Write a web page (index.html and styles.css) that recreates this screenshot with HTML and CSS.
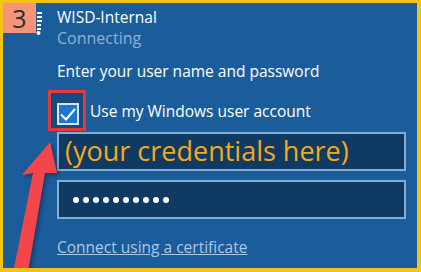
FILE: index.html
```html
<!DOCTYPE html>
<html lang="en">
<head>
    <meta charset="UTF-8">
    <meta name="viewport" content="width=device-width, initial-scale=1.0">
    <title>WISD-Internal</title>
    <link rel="stylesheet" href="styles.css">
</head>
<body>
    <div class="frame">
        <svg class="wifi" width="10" height="26" viewBox="0 0 10 26">
            <g fill="#fff">
                <rect x="1" y="0" width="5" height="2"/>
                <rect x="1" y="4" width="5" height="2"/>
                <rect x="1" y="8" width="5" height="2"/>
                <rect x="1" y="12" width="4" height="2"/>
                <rect x="1" y="16" width="4" height="2"/>
                <circle cx="2.5" cy="21" r="2"/>
            </g>
        </svg>
        <div class="badge">3</div>

        <div class="panel">
            <div class="network">WISD-Internal</div>
            <div class="status">Connecting</div>
            <p class="prompt">Enter your user name and password</p>
            <div class="check-row">
                <span class="highlight">
                    <span class="check-box">
                        <svg width="18" height="18" viewBox="0 0 18 18">
                            <path d="M2 9.5 L7 14.5 L16 4" fill="none" stroke="#fff" stroke-width="2"/>
                        </svg>
                    </span>
                </span>
                <span class="check-label">Use my Windows user account</span>
            </div>
            <div class="field field-user">(your credentials here)</div>
            <div class="field field-pass">
                <span class="dot"></span><span class="dot"></span><span class="dot"></span><span class="dot"></span><span class="dot"></span>
                <span class="dot"></span><span class="dot"></span><span class="dot"></span><span class="dot"></span><span class="dot"></span>
            </div>
            <a class="cert-link" href="#">Connect using a certificate</a>
        </div>

        <svg class="arrow" width="70" height="140" viewBox="0 0 70 140">
            <polygon points="12,140 33,35 22,37 50,4 57,35 45,35 27,140" fill="#f2464a"/>
        </svg>
    </div>
</body>
</html>
```

FILE: styles.css
```css
body {
    margin: 0;
    font-family: "Open Sans", "Noto Sans", sans-serif;
}
.frame {
    position: relative;
    width: 421px;
    height: 272px;
    box-sizing: border-box;
    border: 3px solid #f5c316;
    border-right-width: 4px;
    border-bottom-width: 4px;
    background: #1b5d9b;
    overflow: hidden;
}
.badge {
    position: absolute;
    left: 0;
    top: 0;
    width: 33px;
    height: 30px;
    background: #f4957a;
    color: #2c2c34;
    font-size: 25px;
    line-height: 30px;
    text-align: center;
}
.wifi {
    position: absolute;
    left: 33px;
    top: 9px;
}
.panel {
    padding: 4px 0 0 54px;
    width: 349px;
}
.network {
    color: #fff;
    font-size: 15.5px;
    line-height: 20px;
}
.status {
    color: #8fb1d3;
    font-size: 16px;
    line-height: 22px;
}
.prompt {
    color: #fff;
    font-size: 15.5px;
    line-height: 20px;
    margin: 12px 0 0;
}
.check-row {
    display: flex;
    align-items: center;
    margin-top: 9px;
}
.highlight {
    display: flex;
    margin-left: -9px;
    padding: 10px 4px 3px 6px;
    border: 3px solid #e8373c;
    background: #154c80;
}
.check-box {
    display: flex;
    align-items: center;
    justify-content: center;
    width: 18px;
    height: 18px;
    border: 2px solid #d8e6f4;
    background: #1e77cf;
}
.check-label {
    color: #fff;
    font-size: 15.5px;
    margin-left: 4px;
}
.field {
    height: 35px;
    border: 2px solid #86acd3;
    background: #0e3a64;
}
.field-user {
    margin-top: 1px;
    color: #f6a81c;
    font-size: 27px;
    line-height: 33px;
    padding-left: 6px;
}
.field-pass {
    display: flex;
    align-items: center;
    gap: 4px;
    margin-top: 9px;
    padding-left: 14px;
}
.dot {
    width: 6px;
    height: 6px;
    border-radius: 50%;
    background: #fff;
}
.cert-link {
    display: inline-block;
    margin-top: 18px;
    color: #a9c9ea;
    font-size: 15.5px;
    line-height: 20px;
}
.arrow {
    position: absolute;
    left: -3px;
    top: 135px;
    filter: drop-shadow(2px 2px 2px rgba(0, 0, 0, 0.35));
}
```
